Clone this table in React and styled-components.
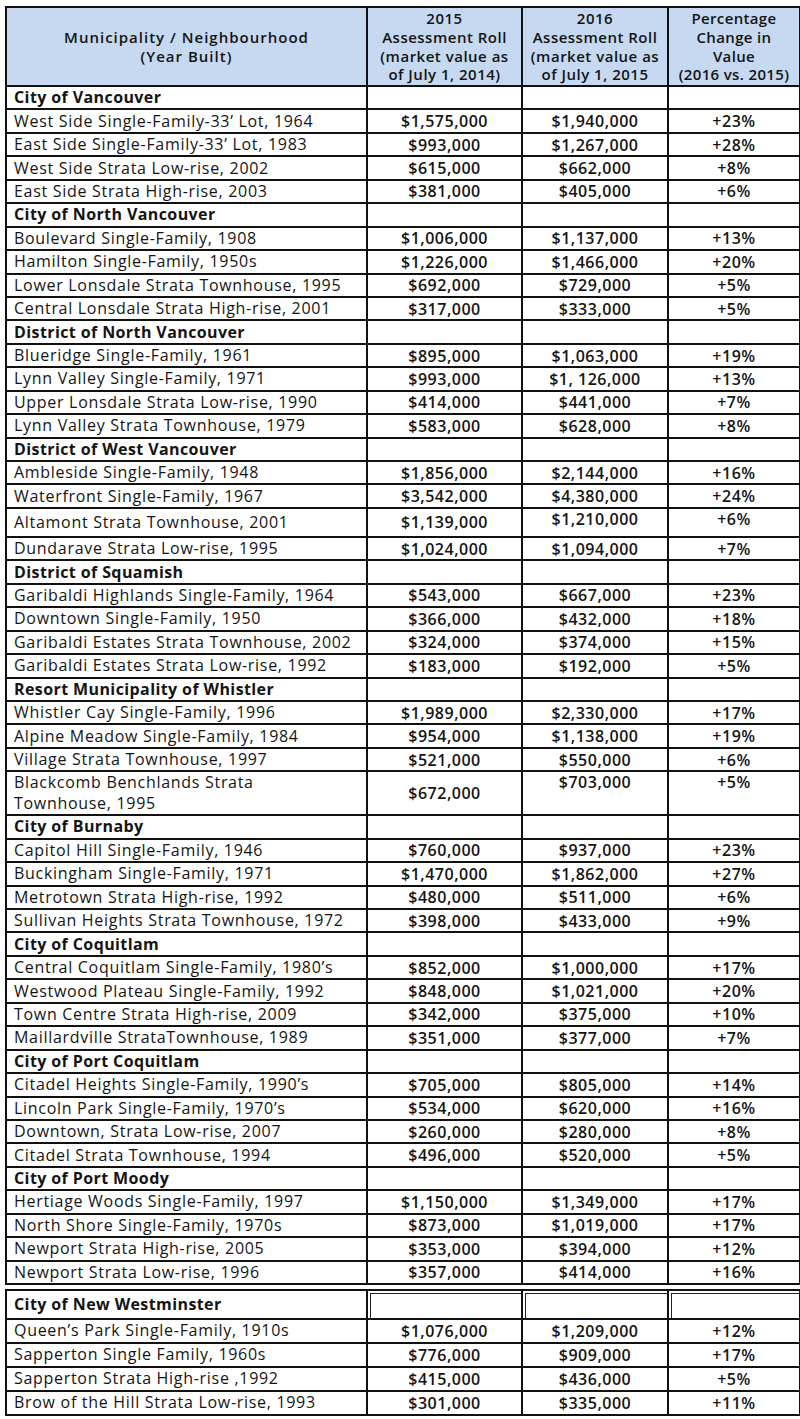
import React from 'react'
import styled, { createGlobalStyle, css } from 'styled-components';

const GlobalStyle = createGlobalStyle`
    body{
        margin:0;
        background:#fff;
        font-family:"Open Sans", "Liberation Sans", sans-serif;
        color:#141414;
    }
`

const Page = styled.div`
    padding:6px 1px 4px 5px;
    display:flex;
    flex-direction:column;
    gap:4px;
`

const Table = styled.table`
    width:794px;
    border-collapse:collapse;
    table-layout:fixed;
    font-size:16px;
`

const HeadCell = styled.th`
    background-color:#c6d9f1;
    border:2px solid #111;
    font-size:15px;
    font-weight:600;
    letter-spacing:${p => p.$spacing || '0.5px'};
    line-height:18.8px;
    padding:0;
    text-align:center;
    vertical-align:middle;
    height:77px;
`

const Row = styled.tr`
    height:${p => p.$h || 23.45}px;
`

const doubled = css`
    box-shadow:inset 2px 2px 0 #fff, inset 3px 3px 0 #222;
`

const NameCell = styled.td`
    border:2px solid #111;
    padding:0 4px 0 7px;
    line-height:21px;
    white-space:pre-line;
    font-weight:${p => p.$section ? 700 : 400};
    letter-spacing:${p => p.$section ? '0.4px' : '0.7px'};
    vertical-align:middle;
`

const ValueCell = styled.td`
    border:2px solid #111;
    padding:0 2px;
    text-align:center;
    font-weight:600;
    letter-spacing:0.5px;
    line-height:20px;
    vertical-align:${p => p.$top ? 'top' : 'middle'};
    ${p => p.$doubled && doubled}
`

const data = [
    ['City of Vancouver', [
        ['West Side Single-Family-33\u2019 Lot, 1964', '$1,575,000', '$1,940,000', '+23%'],
        ['East Side Single-Family-33\u2019 Lot, 1983', '$993,000', '$1,267,000', '+28%'],
        ['West Side Strata Low-rise, 2002', '$615,000', '$662,000', '+8%'],
        ['East Side Strata High-rise, 2003', '$381,000', '$405,000', '+6%'],
    ]],
    ['City of North Vancouver', [
        ['Boulevard Single-Family, 1908', '$1,006,000', '$1,137,000', '+13%'],
        ['Hamilton Single-Family, 1950s', '$1,226,000', '$1,466,000', '+20%'],
        ['Lower Lonsdale Strata Townhouse, 1995', '$692,000', '$729,000', '+5%'],
        ['Central Lonsdale Strata High-rise, 2001', '$317,000', '$333,000', '+5%'],
    ]],
    ['District of North Vancouver', [
        ['Blueridge Single-Family, 1961', '$895,000', '$1,063,000', '+19%'],
        ['Lynn Valley Single-Family, 1971', '$993,000', '$1, 126,000', '+13%'],
        ['Upper Lonsdale Strata Low-rise, 1990', '$414,000', '$441,000', '+7%'],
        ['Lynn Valley Strata Townhouse, 1979', '$583,000', '$628,000', '+8%'],
    ]],
    ['District of West Vancouver', [
        ['Ambleside Single-Family, 1948', '$1,856,000', '$2,144,000', '+16%'],
        ['Waterfront Single-Family, 1967', '$3,542,000', '$4,380,000', '+24%'],
        ['Altamont Strata Townhouse, 2001', '$1,139,000', '$1,210,000', '+6%', 29],
        ['Dundarave Strata Low-rise, 1995', '$1,024,000', '$1,094,000', '+7%'],
    ]],
    ['District of Squamish', [
        ['Garibaldi Highlands Single-Family, 1964', '$543,000', '$667,000', '+23%'],
        ['Downtown Single-Family, 1950', '$366,000', '$432,000', '+18%'],
        ['Garibaldi Estates Strata Townhouse, 2002', '$324,000', '$374,000', '+15%'],
        ['Garibaldi Estates Strata Low-rise, 1992', '$183,000', '$192,000', '+5%'],
    ]],
    ['Resort Municipality of Whistler', [
        ['Whistler Cay Single-Family, 1996', '$1,989,000', '$2,330,000', '+17%'],
        ['Alpine Meadow Single-Family, 1984', '$954,000', '$1,138,000', '+19%'],
        ['Village Strata Townhouse, 1997', '$521,000', '$550,000', '+6%'],
        ['Blackcomb Benchlands Strata\nTownhouse, 1995', '$672,000', '$703,000', '+5%', 42],
    ]],
    ['City of Burnaby', [
        ['Capitol Hill Single-Family, 1946', '$760,000', '$937,000', '+23%'],
        ['Buckingham Single-Family, 1971', '$1,470,000', '$1,862,000', '+27%'],
        ['Metrotown Strata High-rise, 1992', '$480,000', '$511,000', '+6%'],
        ['Sullivan Heights Strata Townhouse, 1972', '$398,000', '$433,000', '+9%'],
    ]],
    ['City of Coquitlam', [
        ['Central Coquitlam Single-Family, 1980\u2019s', '$852,000', '$1,000,000', '+17%'],
        ['Westwood Plateau Single-Family, 1992', '$848,000', '$1,021,000', '+20%'],
        ['Town Centre Strata High-rise, 2009', '$342,000', '$375,000', '+10%'],
        ['Maillardville StrataTownhouse, 1989', '$351,000', '$377,000', '+7%'],
    ]],
    ['City of Port Coquitlam', [
        ['Citadel Heights Single-Family, 1990\u2019s', '$705,000', '$805,000', '+14%'],
        ['Lincoln Park Single-Family, 1970\u2019s', '$534,000', '$620,000', '+16%'],
        ['Downtown, Strata Low-rise, 2007', '$260,000', '$280,000', '+8%'],
        ['Citadel Strata Townhouse, 1994', '$496,000', '$520,000', '+5%'],
    ]],
    ['City of Port Moody', [
        ['Hertiage Woods Single-Family, 1997', '$1,150,000', '$1,349,000', '+17%'],
        ['North Shore Single-Family, 1970s', '$873,000', '$1,019,000', '+17%'],
        ['Newport Strata High-rise, 2005', '$353,000', '$394,000', '+12%'],
        ['Newport Strata Low-rise, 1996', '$357,000', '$414,000', '+16%'],
    ]],
]

const westminster = ['City of New Westminster', [
    ['Queen\u2019s Park Single-Family, 1910s', '$1,076,000', '$1,209,000', '+12%', 23.5],
    ['Sapperton Single Family, 1960s', '$776,000', '$909,000', '+17%', 24],
    ['Sapperton Strata High-rise ,1992', '$415,000', '$436,000', '+5%', 24],
    ['Brow of the Hill Strata Low-rise, 1993', '$301,000', '$335,000', '+11%', 24],
]]

const Cols = () => (
    <colgroup>
        <col style={{ width: 361 }} />
        <col style={{ width: 155 }} />
        <col style={{ width: 146 }} />
        <col style={{ width: 132 }} />
    </colgroup>
)

const Section = ({ title, rows, headH, doubledHead }) => (
    <>
        <Row $h={headH}>
            <NameCell $section>{title}</NameCell>
            <ValueCell $doubled={doubledHead} />
            <ValueCell $doubled={doubledHead} />
            <ValueCell $doubled={doubledHead} />
        </Row>
        {rows.map(([name, a, b, c, h]) => {
            const tall = h > 25
            return (
                <Row key={name} $h={h}>
                    <NameCell>{name}</NameCell>
                    <ValueCell>{a}</ValueCell>
                    <ValueCell $top={tall}>{b}</ValueCell>
                    <ValueCell $top={tall}>{c}</ValueCell>
                </Row>
            )
        })}
    </>
)

const App = () => {
    return (
        <Page>
            <GlobalStyle />
            <Table>
                <Cols />
                <thead>
                    <tr>
                        <HeadCell $spacing="1px">Municipality / Neighbourhood<br />(Year Built)</HeadCell>
                        <HeadCell>2015<br />Assessment Roll<br />(market value as<br />of July 1, 2014)</HeadCell>
                        <HeadCell>2016<br />Assessment Roll<br />(market value as<br />of July 1, 2015</HeadCell>
                        <HeadCell $spacing="0.35px">Percentage<br />Change in<br />Value<br />(2016 vs. 2015)</HeadCell>
                    </tr>
                </thead>
                <tbody>
                    {data.map(([title, rows]) => (
                        <Section key={title} title={title} rows={rows} />
                    ))}
                </tbody>
            </Table>
            <Table>
                <Cols />
                <tbody>
                    <Section title={westminster[0]} rows={westminster[1]} headH={29} doubledHead />
                </tbody>
            </Table>
        </Page>
    )
}

export default App
